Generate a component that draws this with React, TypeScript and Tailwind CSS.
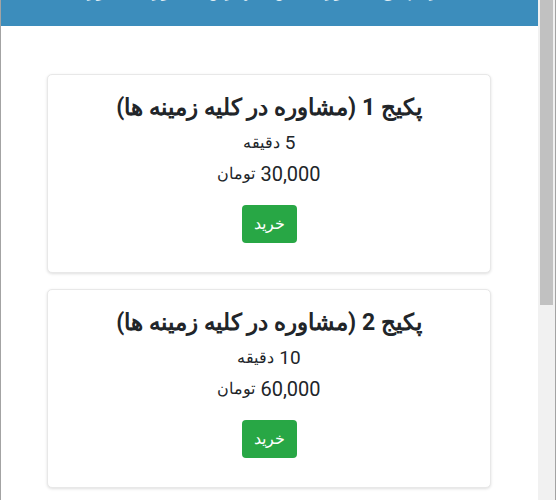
const packages = [
  { id: 1, minutes: "5", price: "30,000" },
  { id: 2, minutes: "10", price: "60,000" },
  { id: 3, minutes: "15", price: "90,000" },
];

function PackageCard({ id, minutes, price }: { id: number; minutes: string; price: string }) {
  return (
    <div className="flex flex-col items-center rounded-[5px] border border-[#e8e8e8] bg-white px-5 pt-5 pb-[29px] text-center text-[#212529] shadow-[0_1px_3px_rgba(0,0,0,0.13)]">
      <h4 className="mb-2 flex h-[26px] items-center text-[23px] font-bold leading-[26px]">
        پکیج {id} (مشاوره در کلیه زمینه ها)
      </h4>
      <div className="flex h-[27px] items-center gap-[5px] leading-none">
        <span className="text-[19px]">{minutes}</span>
        <span className="text-[16px]">دقیقه</span>
      </div>
      <div className="mt-[3px] flex h-[30px] items-center gap-[5px] leading-none">
        <span className="text-[20px]">{price}</span>
        <span className="text-[16px]">تومان</span>
      </div>
      <button
        type="button"
        className="mt-4 h-[38px] rounded-[4px] bg-[#28a745] px-3 text-[16px] leading-none text-white"
      >
        خرید
      </button>
    </div>
  );
}

export default function App() {
  return (
    <div
      className="flex h-[500px] w-[560px] overflow-hidden bg-white"
      style={{ fontFamily: "Roboto, 'Noto Sans', sans-serif" }}
    >
      <div className="w-px shrink-0 bg-[#a3a3a3]" />

      <div dir="rtl" className="flex w-[537px] shrink-0 flex-col overflow-hidden">
        <header className="h-[26px] shrink-0 overflow-hidden bg-[#3c8dbc] text-center">
          <div className="-mt-[22px] text-[18px] font-bold leading-[24px] text-white">
            خرید پکیج مشاوره آنلاین با بهترین مشاوران کشور
          </div>
        </header>

        <main className="flex flex-col gap-4 pt-12 pr-[47px] pl-[46px]">
          {packages.map((p) => (
            <PackageCard key={p.id} {...p} />
          ))}
        </main>
      </div>

      {/* scrollbar */}
      <div className="flex w-[17px] shrink-0 justify-center bg-[#f1f1f1]">
        <div className="h-[305px] w-[13px] bg-[#c1c1c1]" />
      </div>
      <div className="w-px shrink-0 bg-[#a3a3a3]" />
      <div className="w-[4px] shrink-0 bg-white" />
    </div>
  );
}
